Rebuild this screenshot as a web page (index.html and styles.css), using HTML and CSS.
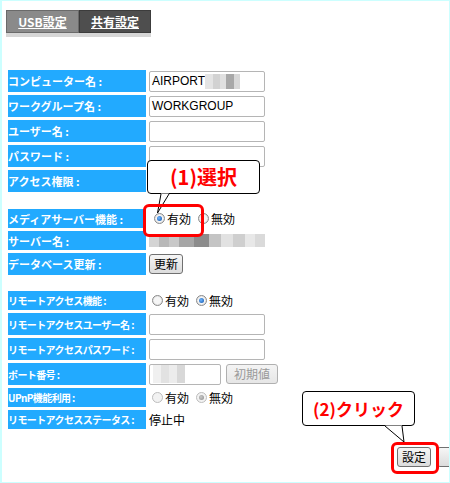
FILE: index.html
```html
<!DOCTYPE html>
<html lang="ja">
<head>
<meta charset="utf-8">
<link rel="stylesheet" href="styles.css">
</head>
<body>
<div class="tabs">
  <div class="tab tab-usb">USB設定</div>
  <div class="tab tab-share">共有設定</div>
</div>
<div class="form">
  <div class="row"><div class="label">コンピューター名 :</div><div class="val"><div class="input"><span>AIRPORT</span><span class="blur blur-name"></span></div></div></div>
  <div class="row"><div class="label">ワークグループ名 :</div><div class="val"><div class="input"><span>WORKGROUP</span></div></div></div>
  <div class="row"><div class="label">ユーザー名 :</div><div class="val"><div class="input"></div></div></div>
  <div class="row"><div class="label">パスワード :</div><div class="val"><div class="input"></div></div></div>
  <div class="row"><div class="label">アクセス権限 :</div><div class="val"></div></div>
  <div class="spacer"></div>
  <div class="row short"><div class="label">メディアサーバー機能 :</div><div class="val radios r5"><span class="radio on"></span><span class="rt">有効</span><span class="radio"></span><span class="rt">無効</span></div></div>
  <div class="row short"><div class="label">サーバー名 :</div><div class="val"><span class="blur blur-server"></span></div></div>
  <div class="row"><div class="label">データベース更新 :</div><div class="val"><span class="btn">更新</span></div></div>
  <div class="spacer s2"></div>
  <div class="row short"><div class="label small">リモートアクセス機能 :</div><div class="val radios r3"><span class="radio"></span><span class="rt">有効</span><span class="radio on"></span><span class="rt">無効</span></div></div>
  <div class="row"><div class="label small">リモートアクセスユーザー名 :</div><div class="val"><div class="input"></div></div></div>
  <div class="row"><div class="label small">リモートアクセスパスワード :</div><div class="val"><div class="input"></div></div></div>
  <div class="row"><div class="label small">ポート番号 :</div><div class="val port"><div class="input short-input"><span class="blur blur-port"></span></div><span class="btn disabled">初期値</span></div></div>
  <div class="row short"><div class="label small">UPnP機能利用 :</div><div class="val radios r3"><span class="radio dis"></span><span class="rt">有効</span><span class="radio dis on"></span><span class="rt">無効</span></div></div>
  <div class="row short"><div class="label small">リモートアクセスステータス :</div><div class="val"><span class="status">停止中</span></div></div>
</div>
<div class="actions">
  <span class="btn set">設定</span><span class="btn next"></span>
</div>

<div class="callout c1">(1)選択</div>
<svg class="tail t1" width="20" height="24" viewBox="0 0 20 24"><polygon points="5,0.5 13,0.5 1.5,20" fill="#fff"/><polyline points="5,1 1.5,20 13,1" fill="none" stroke="#000" stroke-width="1"/></svg>
<div class="redbox b1"></div>

<div class="callout c2">(2)クリック</div>
<svg class="tail t2" width="24" height="20" viewBox="0 0 24 20"><polygon points="2,0.5 19,0.5 21,17" fill="#fff"/><polyline points="2,1 21,17 19,1" fill="none" stroke="#000" stroke-width="1"/></svg>
<div class="redbox b2"></div>
</body>
</html>
```
FILE: styles.css
```css
* { box-sizing: border-box; }
html, body { margin: 0; padding: 0; }
body {
  width: 450px;
  height: 483px;
  border: 1px solid #ccffff;
  border-left-width: 2px;
  background: #fff;
  position: relative;
  overflow: hidden;
  font-family: "Liberation Sans", "Noto Sans CJK JP", sans-serif;
  font-size: 12px;
  color: #000;
}
.tabs {
  display: flex;
  margin: 9px 0 0 4px;
  width: 145px;
  border-bottom: 4px solid #d6d6d6;
}
.tab {
  height: 23px;
  display: flex;
  align-items: center;
  justify-content: center;
  color: #fff;
  font-family: "Noto Sans CJK JP", sans-serif;
  font-weight: bold;
  font-size: 12px;
  text-decoration: underline;
  border: 1px solid #6a6a6a;
}
.tab-usb { width: 73px; background: #8a8a8a; }
.tab-share { width: 72px; background: #4e4e4e; border-color: #3c3c3c; }

.form {
  margin: 33px 0 0 6px;
  display: flex;
  flex-direction: column;
  gap: 3px;
}
.row { display: flex; gap: 3px; height: 22px; }
.row.short { height: 19px; }
.spacer { height: 11px; }
.spacer.s2 { height: 10px; }
.label {
  width: 138px;
  flex: none;
  background: #22aaff;
  color: #fff;
  font-family: "Noto Sans CJK JP", sans-serif;
  font-weight: bold;
  font-size: 11px;
  display: flex;
  align-items: center;
  white-space: nowrap;
  overflow: hidden;
}
.label.small { font-size: 10px; letter-spacing: -0.6px; }
.val { display: flex; align-items: center; }
.input {
  width: 116px;
  height: 21px;
  border: 1px solid #b5b5b5;
  border-radius: 2px;
  background: #fff;
  display: flex;
  align-items: center;
  padding-left: 2px;
  font-size: 12px;
}
.short-input { width: 72px; padding-left: 3px; }
.port { gap: 5px; }
.blur { display: inline-block; }
.blur-name {
  width: 35px; height: 15px;
  background: linear-gradient(90deg, #e4e4e4 0 8px, #d2d2d2 8px 15px, #e0e0e0 15px 21px, #a8a8a8 21px 29px, #d8d8d8 29px 35px);
}
.blur-server {
  width: 116px; height: 13px;
  background: linear-gradient(90deg, #d4d4d4 0 10px, #b8b8b8 10px 20px, #c8c8c8 20px 30px, #a6a6a6 30px 45px, #8c8c8c 45px 60px, #c4c4c4 60px 72px, #e2e2e2 72px 84px, #cfcfcf 84px 96px, #e8e8e8 96px 106px, #dadada 106px 116px);
}
.blur-port {
  width: 32px; height: 18px;
  background: linear-gradient(90deg, #f0f0f0 0 8px, #e2e2e2 8px 16px, #ececec 16px 24px, #d8d8d8 24px 32px);
}
.radios .rt { font-family: "Noto Sans CJK JP", sans-serif; font-size: 12px; line-height: 1; }
.r5 { padding-left: 5px; }
.r3 { padding-left: 3px; }
.radio {
  width: 11px; height: 11px;
  border-radius: 50%;
  border: 1px solid #8a8a8a;
  background: radial-gradient(circle, #f6f6f6 0 3px, #dcdcdc 5px);
  margin-right: 2px;
  position: relative;
}
.radio + .rt + .radio { margin-left: 7px; }
.radio.on::after {
  content: "";
  position: absolute;
  left: 2px; top: 2px;
  width: 5px; height: 5px;
  border-radius: 50%;
  background: radial-gradient(circle at 40% 40%, #6fb7ff, #0b4fa8);
}
.radio.dis { border-color: #bdbdbd; background: #f2f2f2; }
.radio.dis.on::after { background: radial-gradient(circle at 40% 40%, #c8c8c8, #8a8a8a); }
.btn {
  display: inline-flex;
  align-items: center;
  justify-content: center;
  height: 20px;
  padding: 0 4px;
  white-space: nowrap;
  border: 1px solid #707070;
  border-radius: 3px;
  background: linear-gradient(#f6f6f6, #dcdcdc);
  font-family: "Noto Sans CJK JP", sans-serif;
  font-size: 12px;
  line-height: 1;
}
.btn.disabled { color: #9a9a9a; border-color: #b0b0b0; background: linear-gradient(#f4f4f4, #e6e6e6); width: 52px; }
.status { font-family: "Noto Sans CJK JP", sans-serif; font-size: 12px; }
.actions {
  position: absolute;
  left: 395px;
  top: 446px;
  display: flex;
  gap: 6px;
}
.btn.set { width: 34px; padding: 0; }
.btn.next { width: 30px; }

.callout {
  position: absolute;
  background: #fff;
  border: 1px solid #000;
  border-radius: 4px;
  color: #ff0000;
  font-family: "Noto Sans CJK JP", sans-serif;
  font-weight: bold;
  line-height: 1;
  display: flex;
  align-items: center;
  justify-content: center;
}
.c1 { left: 145px; top: 159px; width: 113px; height: 34px; font-size: 20px; }
.c2 { left: 300px; top: 390px; width: 113px; height: 35px; font-size: 17px; }
.tail { position: absolute; overflow: visible; }
.t1 { left: 154px; top: 192px; }
.t2 { left: 381px; top: 424px; }
.redbox {
  position: absolute;
  border: 3px solid #ff0000;
  border-radius: 6px;
}
.b1 { left: 141px; top: 203px; width: 61px; height: 33px; }
.b2 { left: 389px; top: 441px; width: 48px; height: 32px; }
```
